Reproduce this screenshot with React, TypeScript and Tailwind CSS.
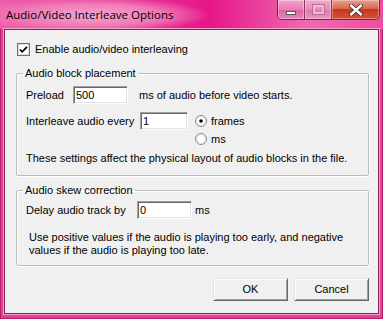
import React from "react";

const ui = "font-['Liberation_Sans',Arial,sans-serif] text-[11px] leading-[13px] text-black";

function Edit({ value, w }: { value: string; w: string }) {
  return (
    <div
      className={`${w} h-[18px] bg-white border border-t-[#a0a0a0] border-l-[#a0a0a0] border-b-white border-r-white shadow-[inset_1px_1px_0_#696969,inset_-1px_-1px_0_#e3e3e3] pl-[2px] flex items-center`}
    >
      {value}
    </div>
  );
}

function Radio({ on }: { on?: boolean }) {
  return (
    <svg width="12" height="12" viewBox="0 0 12 12" className="shrink-0">
      <circle cx="6" cy="6" r="5.5" fill="#fff" stroke="#8a8a8a" />
      <circle cx="6" cy="6" r="4.5" fill="none" stroke="#d8d8d8" />
      {on && <circle cx="6" cy="6" r="1.8" fill="#000" />}
    </svg>
  );
}

function Button({ label }: { label: string }) {
  return (
    <button className="w-[75px] h-[23px] bg-[#f0f0f0] border border-t-[#e3e3e3] border-l-[#e3e3e3] border-b-[#696969] border-r-[#696969] shadow-[inset_1px_1px_0_#fff,inset_-1px_-1px_0_#a0a0a0] text-center">
      {label}
    </button>
  );
}

function Group({ title, children, cls }: { title: string; children: React.ReactNode; cls: string }) {
  return (
    <fieldset className={`w-[353px] border border-[#bcbcbc] shadow-[inset_1px_1px_0_#fff,1px_1px_0_#fff] rounded-[2px] ${cls}`}>
      <legend className="ml-[-3px] px-[2px]">{title}</legend>
      {children}
    </fieldset>
  );
}

export default function App() {
  return (
    <div className="w-[383px] h-[319px] flex flex-col bg-[#ee3b95] shadow-[inset_0_0_0_1px_#b0246c]">
      <div className="h-[29px] flex items-start justify-between bg-[radial-gradient(ellipse_120px_18px_at_90px_15px,#f6a6cf_0%,#f07ab6_60%,transparent_100%),linear-gradient(90deg,#ee5da7_0%,#e6168a_55%,#ef6aae_80%,#ee4d9f_100%)]">
        <div className="pl-[6px] pt-[7px] font-['Open_Sans',Arial,sans-serif] text-[11.5px] leading-[16px] text-black">
          Audio/Video Interleave Options
        </div>
        <div className="mr-[3px] flex h-[20px] rounded-b-[5px] border border-t-0 border-[#6e2a4c] overflow-hidden">
          <div className="w-[27px] flex items-center justify-center bg-[linear-gradient(#f2a3cb,#e77fb5_50%,#df5fa2_51%,#e886ba)] border-r border-[#8a3a62] shadow-[inset_0_0_0_1px_rgba(255,255,255,0.35)]">
            <div className="w-[10px] h-[4px] bg-white border border-[#5a5a5a] mt-[6px]" />
          </div>
          <div className="w-[27px] flex items-center justify-center bg-[linear-gradient(#f0a8cc,#e88cbc_50%,#e274ae_51%,#ea96c2)] border-r border-[#8a3a62] shadow-[inset_0_0_0_1px_rgba(255,255,255,0.35)]">
            <div className="w-[11px] h-[9px] border-2 border-[#f3c3dc] opacity-80 shadow-[0_0_0_1px_#b06a90]" />
          </div>
          <div className="w-[47px] flex items-center justify-center bg-[linear-gradient(#e8a08e,#d8674f_45%,#c8361c_50%,#d2553a)] shadow-[inset_0_0_0_1px_rgba(255,255,255,0.3)]">
            <svg width="14" height="12" viewBox="0 0 14 12">
              <path d="M2 1.5 L12 10.5 M12 1.5 L2 10.5" stroke="#4a2a2a" strokeWidth="4.2" strokeLinecap="round" />
              <path d="M2 1.5 L12 10.5 M12 1.5 L2 10.5" stroke="#fff" strokeWidth="2.4" strokeLinecap="round" />
            </svg>
          </div>
        </div>
      </div>
      <div className="flex-1 mx-[4px] mb-[5px] border border-[#7c2a54] shadow-[0_0_0_1px_#f7a0cb] bg-[#f0f0f0] flex flex-col pl-[11px]">
        <div className={`${ui} flex flex-col`}>
          <label className="mt-[13px] ml-[1px] flex items-center gap-[5px]">
            <svg width="13" height="13" viewBox="0 0 13 13">
              <rect x="0.5" y="0.5" width="12" height="12" fill="#fff" stroke="#707070" />
              <rect x="1.5" y="1.5" width="10" height="10" fill="none" stroke="#dcdcdc" />
              <path d="M3 6.5 L5.2 8.8 L10 3.8" fill="none" stroke="#000" strokeWidth="1.8" />
            </svg>
            <span>Enable audio/video interleaving</span>
          </label>

          <Group title="Audio block placement" cls="mt-[11px] pl-[9px] pb-[10px]">
            <div className="mt-[6px] flex items-center">
              <span className="w-[47px]">Preload</span>
              <Edit value="500" w="w-[55px]" />
              <span className="ml-[11px]">ms of audio before video starts.</span>
            </div>
            <div className="mt-[8px] flex items-start">
              <span className="w-[114px] h-[18px] flex items-center">Interleave audio every</span>
              <Edit value="1" w="w-[48px]" />
              <div className="ml-[7px] flex flex-col">
                <div className="h-[18px] flex items-center gap-[4px]">
                  <Radio on />
                  <span>frames</span>
                </div>
                <div className="h-[18px] flex items-center gap-[4px]">
                  <Radio />
                  <span>ms</span>
                </div>
              </div>
            </div>
            <div className="mt-[4px]">These settings affect the physical layout of audio blocks in the file.</div>
          </Group>

          <Group title="Audio skew correction" cls="mt-[8px] pl-[9px] pb-[8px]">
            <div className="mt-[4px] flex items-center">
              <span className="w-[111px]">Delay audio track by</span>
              <Edit value="0" w="w-[55px]" />
              <span className="ml-[3px]">ms</span>
            </div>
            <div className="mt-[12px] pl-[3px]">
              Use positive values if the audio is playing too early, and negative
              <br />
              values if the audio is playing too late.
            </div>
          </Group>

          <div className="w-[353px] mt-[12px] flex justify-end gap-[6px]">
            <Button label="OK" />
            <Button label="Cancel" />
          </div>
        </div>
      </div>
    </div>
  );
}
